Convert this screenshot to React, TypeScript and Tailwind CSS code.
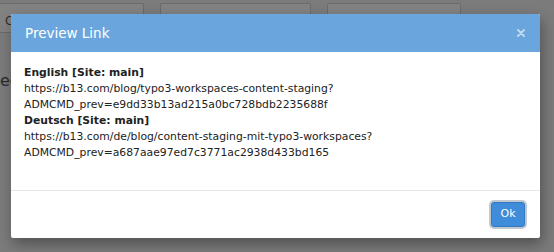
export default function App() {
  const bgButtons = [
    { label: "Choose", w: "w-[148px]" },
    { label: "Choose", w: "w-[151px]" },
    { label: "Choose", w: "w-[134px]" },
  ];

  return (
    <div className="relative w-[554px] h-[252px] overflow-hidden bg-[#7b7b7b] font-['DejaVu_Sans',Verdana,sans-serif]">
      {/* Page behind the overlay */}
      <div className="flex gap-[16px] pt-[3px] -ml-[4px]">
        {bgButtons.map((b, i) => (
          <div
            key={i}
            className={`${b.w} h-[30px] shrink-0 rounded-[2px] border border-[#6a6a6a] bg-[#828282] pl-[8px] pt-[8px] text-[12px] text-[#2e2e2e] whitespace-nowrap`}
          >
            {b.label}
          </div>
        ))}
      </div>
      <div className="mt-[38px] text-[16px] leading-[20px] text-[#2a2a2a]">eg</div>

      {/* Modal */}
      <div className="absolute left-[11px] top-[14px] w-[529px] bg-white rounded-[2px] shadow-[2px_6px_14px_rgba(0,0,0,0.35)] overflow-hidden">
        <div className="h-[38px] bg-[#6aa6dd] flex items-center justify-between pl-[14px] pr-[15px]">
          <span className="text-[13.5px] text-white">Preview Link</span>
          <svg width="8" height="8" viewBox="0 0 8 8" className="opacity-60">
            <path d="M1 1L7 7M7 1L1 7" stroke="white" strokeWidth="1.8" strokeLinecap="round" />
          </svg>
        </div>
        <div className="pl-[13px] pt-[13px] pb-[29px] text-[10.8px] leading-[16px] text-[#222]">
          <div className="font-bold">English [Site: main]</div>
          <div>https://b13.com/blog/typo3-workspaces-content-staging?</div>
          <div>ADMCMD_prev=e9dd33b13ad215a0bc728bdb2235688f</div>
          <div className="font-bold">Deutsch [Site: main]</div>
          <div>https://b13.com/de/blog/content-staging-mit-typo3-workspaces?</div>
          <div>ADMCMD_prev=a687aae97ed7c3771ac2938d433bd165</div>
        </div>
        <div className="h-[48px] border-t border-[#e6e6e6] flex justify-end items-start pt-[11px] pr-[15px]">
          <button className="w-[34px] h-[25px] rounded-[3px] bg-[#3f8cda] border border-[#3479c0] ring-2 ring-[#c0c9d2] text-white text-[11px]">
            Ok
          </button>
        </div>
      </div>
    </div>
  );
}
